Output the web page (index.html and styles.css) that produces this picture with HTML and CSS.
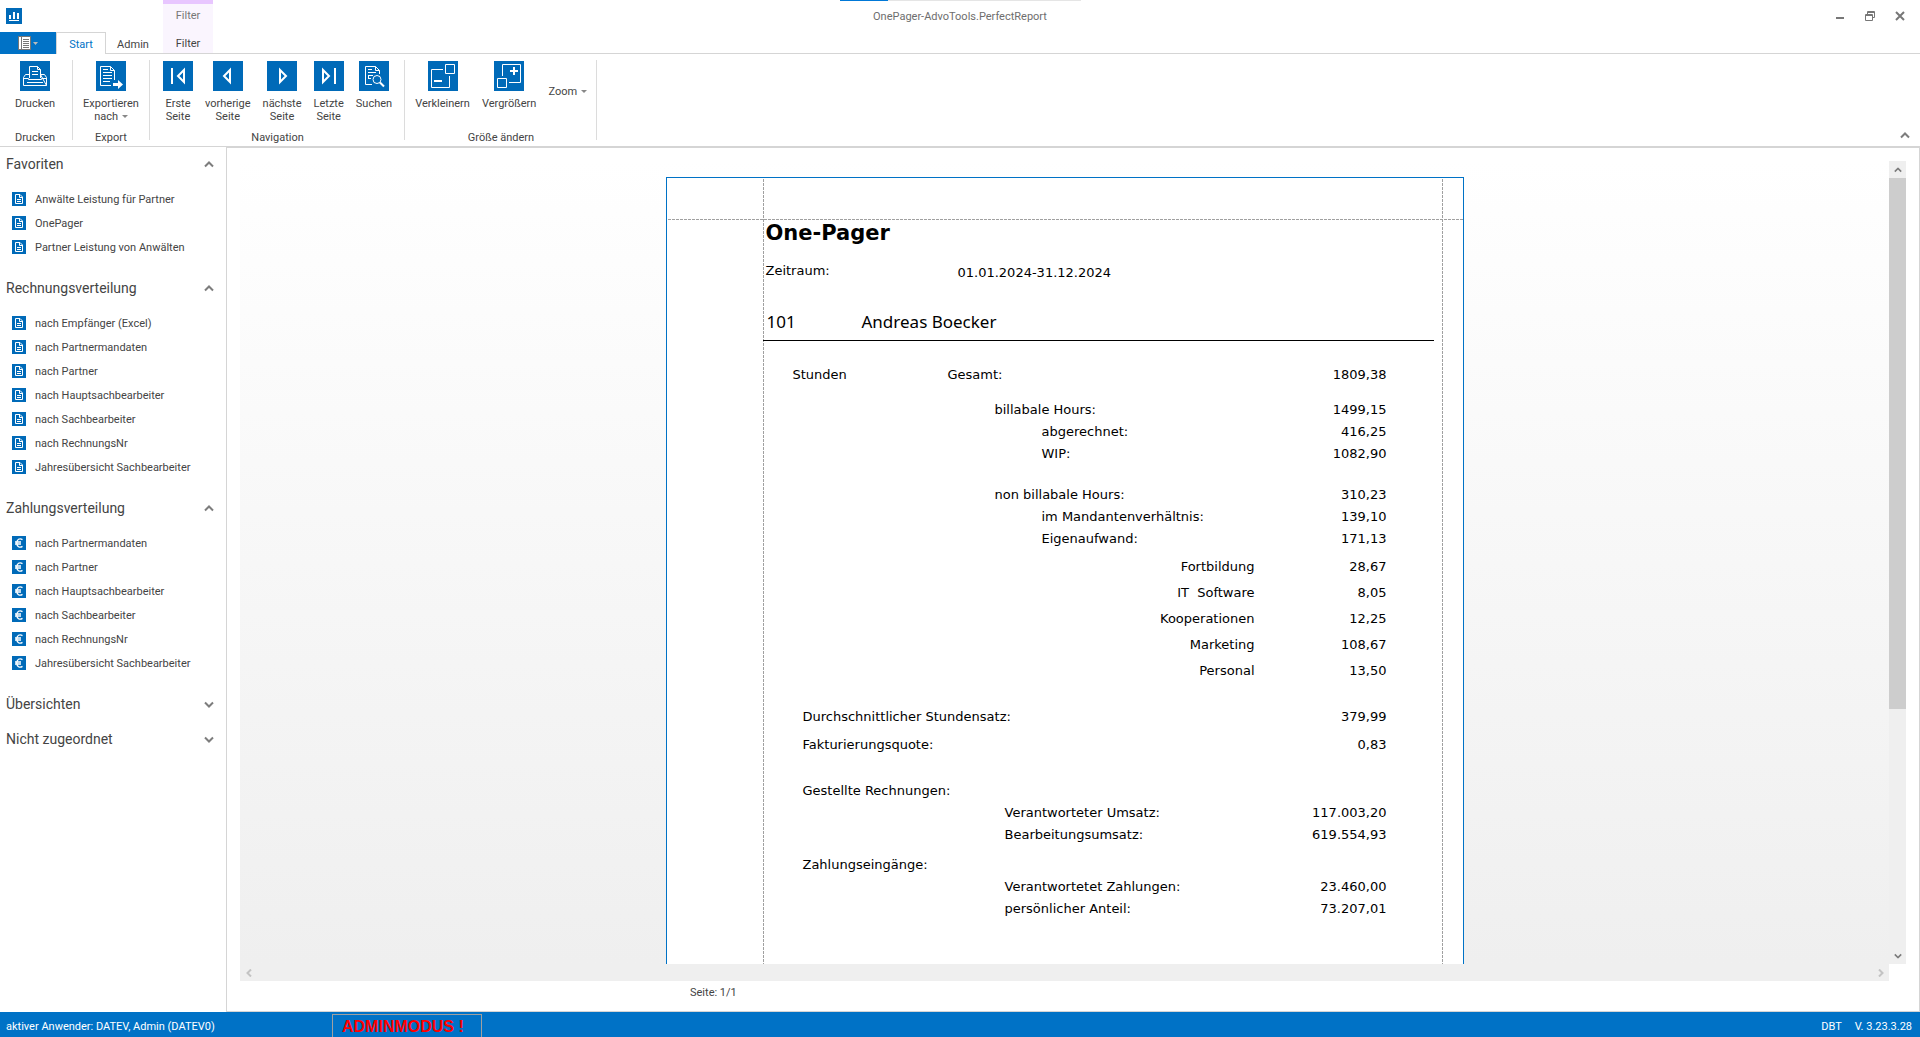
FILE: index.html
```html
<!DOCTYPE html>
<html lang="de">
<head>
    <meta charset="UTF-8">
    <meta name="viewport" content="width=device-width, initial-scale=1.0">
    <title>OnePager-AdvoTools.PerfectReport</title>
    <link rel="stylesheet" href="styles.css">
</head>
<body>
    <!-- Shared icons for the sidebar -->
    <svg class="defs" width="0" height="0">
        <symbol id="doc" viewBox="0 0 14 14">
            <rect width="14" height="14" fill="#006ab8"/>
            <path d="M3.5 2.5h4.500l2.500 2.500v6.500h-7zM7.500 2.500v3h3M5 7.500h4M5 9.500h4" fill="none" stroke="#fff"/>
        </symbol>
        <symbol id="euro" viewBox="0 0 14 14">
            <rect width="14" height="14" fill="#006ab8"/>
            <path d="M10.500 3.600C7.500 1.800 4.800 3.500 4.800 7s2.700 5.200 5.700 3.400M3 6h6M3 8h6" fill="none" stroke="#fff" stroke-width="1.300"/>
        </symbol>
        <symbol id="up" viewBox="0 0 10 7">
            <path d="M1 5.500l4-4 4 4" fill="none" stroke="#7d7d7d" stroke-width="2"/>
        </symbol>
        <symbol id="down" viewBox="0 0 10 7">
            <path d="M1 1.500l4 4 4-4" fill="none" stroke="#7d7d7d" stroke-width="2"/>
        </symbol>
    </svg>

    <header class="titlebar">
        <div class="titleLeft">
            <svg class="appIcon" width="16" height="16" viewBox="0 0 16 16">
                <rect width="16" height="16" fill="#006ab8"/>
                <path d="M4 7v4M8 4v7M12 5v6" stroke="#fff" stroke-width="2"/>
                <path d="M3 12.500h10" stroke="#fff"/>
            </svg>
            <span class="contextTitle">Filter</span>
        </div>
        <div class="title">OnePager-AdvoTools.PerfectReport</div>
        <div class="windowButtons">
            <button aria-label="Minimieren"><svg width="10" height="10"><path d="M1 7h8" stroke="#777" stroke-width="2"/></svg></button>
            <button aria-label="Wiederherstellen"><svg width="10" height="10"><path d="M.5 3.500h7v6h-7zM.5 4.500h7M2.500 3V.5h7v6H8M2.500 1.500h7" fill="none" stroke="#777"/></svg></button>
            <button aria-label="Schließen"><svg width="10" height="10"><path d="M1 1l8 8M9 1L1 9" stroke="#777" stroke-width="2"/></svg></button>
        </div>
        <div class="loadBar"><div class="loadDone"></div></div>
    </header>

    <nav class="tabs">
        <button class="appMenu" aria-label="Datei">
            <svg width="20" height="14" viewBox="0 0 20 14">
                <rect x=".5" y=".5" width="12" height="13" fill="#fff" stroke="#777"/>
                <path d="M3.500 0v14M5 3.500h6M5 5.500h6M5 7.500h6M5 9.500h6M5 11.500h6" stroke="#777"/>
                <path d="M15 6h5l-2.500 3z" fill="#bbb"/>
            </svg>
        </button>
        <button class="tab active">Start</button>
        <button class="tab">Admin</button>
        <button class="tab context">Filter</button>
    </nav>

    <div class="ribbon">
        <section class="group small">
            <div class="tools">
                <button class="tool">
                    <svg width="30" height="30"><rect width="30" height="30" fill="#006ab8"/><path d="M3.500 24.500v-8l2-3h4M20.500 13.500h4l2 3v8zM3.500 24.500h23M7 21.500h16M3.500 17.500h5v1h13v-1h5M9.500 17V5.500h8l3 3V17M17.500 5.500v3h3M12 10.500h6M12 13.500h6" fill="none" stroke="#fff"/></svg>
                    <span>Drucken</span>
                </button>
            </div>
            <div class="caption">Drucken</div>
        </section>
        <section class="group medium">
            <div class="tools">
                <button class="tool">
                    <svg width="30" height="30"><rect width="30" height="30" fill="#006ab8"/><path d="M15 24.500H4.500v-19h10l4 4V19M14.500 5.500v4h4M7 8.500h5M7 11.500h9M7 14.500h9M7 17.500h9M7 20.500h7" fill="none" stroke="#fff"/><path d="M17 22h5v-3l5 4.500-5 4.500v-3h-5z" fill="#fff"/></svg>
                    <span>Exportieren<br>nach <i class="caret"></i></span>
                </button>
            </div>
            <div class="caption">Export</div>
        </section>
        <section class="group navigation">
            <div class="tools">
                <button class="tool">
                    <svg width="30" height="30"><rect width="30" height="30" fill="#006ab8"/><path d="M9 7v16M21 9v12l-6-6z" fill="none" stroke="#fff" stroke-width="2"/></svg>
                    <span>Erste<br>Seite</span>
                </button>
                <button class="tool">
                    <svg width="30" height="30"><rect width="30" height="30" fill="#006ab8"/><path d="M17 9v12l-6-6z" fill="none" stroke="#fff" stroke-width="2"/></svg>
                    <span>vorherige<br>Seite</span>
                </button>
                <button class="tool">
                    <svg width="30" height="30"><rect width="30" height="30" fill="#006ab8"/><path d="M13 9v12l6-6z" fill="none" stroke="#fff" stroke-width="2"/></svg>
                    <span>nächste<br>Seite</span>
                </button>
                <button class="tool">
                    <svg width="30" height="30"><rect width="30" height="30" fill="#006ab8"/><path d="M21 7v16M9 9v12l6-6z" fill="none" stroke="#fff" stroke-width="2"/></svg>
                    <span>Letzte<br>Seite</span>
                </button>
                <button class="tool">
                    <svg width="30" height="30"><rect width="30" height="30" fill="#006ab8"/><path d="M13 23.500H6.500v-18h10l4 4V13M16.500 5.500v4h4M9 8.500h4M9 11.500h8M9 14.500h5M9 17.500h3M9.500 14v4" fill="none" stroke="#fff"/><circle cx="18" cy="18.500" r="4" fill="none" stroke="#fff"/><path d="M21 21.500l4 4" stroke="#fff" stroke-width="2"/></svg>
                    <span>Suchen</span>
                </button>
            </div>
            <div class="caption">Navigation</div>
        </section>
        <section class="group">
            <div class="tools">
                <button class="tool">
                    <svg width="30" height="30"><rect width="30" height="30" fill="#006ab8"/><path d="M15 8.500H3.500v18h18V15M17.500 3.500h9v9h-9z" fill="none" stroke="#fff"/><path d="M6 20h8" stroke="#fff" stroke-width="2"/></svg>
                    <span>Verkleinern</span>
                </button>
                <button class="tool">
                    <svg width="30" height="30"><rect width="30" height="30" fill="#006ab8"/><path d="M8.500 15V3.500h18v18H15M3.500 17.500h9v9h-9z" fill="none" stroke="#fff"/><path d="M16 10h8M20 6v8" stroke="#fff" stroke-width="2"/></svg>
                    <span>Vergrößern</span>
                </button>
                <button class="tool zoom"><span>Zoom <i class="caret"></i></span></button>
            </div>
            <div class="caption">Größe ändern</div>
        </section>
        <button class="collapse" aria-label="Menüband minimieren"><svg width="10" height="7"><use href="#up"/></svg></button>
    </div>

    <div class="content">
        <aside class="sidebar">
            <button class="groupHeader">Favoriten <svg width="10" height="7"><use href="#up"/></svg></button>
            <ul>
                <li><a href="#"><svg width="14" height="14"><use href="#doc"/></svg>Anwälte Leistung für Partner</a></li>
                <li><a href="#"><svg width="14" height="14"><use href="#doc"/></svg>OnePager</a></li>
                <li><a href="#"><svg width="14" height="14"><use href="#doc"/></svg>Partner Leistung von Anwälten</a></li>
            </ul>
            <button class="groupHeader">Rechnungsverteilung <svg width="10" height="7"><use href="#up"/></svg></button>
            <ul>
                <li><a href="#"><svg width="14" height="14"><use href="#doc"/></svg>nach Empfänger (Excel)</a></li>
                <li><a href="#"><svg width="14" height="14"><use href="#doc"/></svg>nach Partnermandaten</a></li>
                <li><a href="#"><svg width="14" height="14"><use href="#doc"/></svg>nach Partner</a></li>
                <li><a href="#"><svg width="14" height="14"><use href="#doc"/></svg>nach Hauptsachbearbeiter</a></li>
                <li><a href="#"><svg width="14" height="14"><use href="#doc"/></svg>nach Sachbearbeiter</a></li>
                <li><a href="#"><svg width="14" height="14"><use href="#doc"/></svg>nach RechnungsNr</a></li>
                <li><a href="#"><svg width="14" height="14"><use href="#doc"/></svg>Jahresübersicht Sachbearbeiter</a></li>
            </ul>
            <button class="groupHeader">Zahlungsverteilung <svg width="10" height="7"><use href="#up"/></svg></button>
            <ul>
                <li><a href="#"><svg width="14" height="14"><use href="#euro"/></svg>nach Partnermandaten</a></li>
                <li><a href="#"><svg width="14" height="14"><use href="#euro"/></svg>nach Partner</a></li>
                <li><a href="#"><svg width="14" height="14"><use href="#euro"/></svg>nach Hauptsachbearbeiter</a></li>
                <li><a href="#"><svg width="14" height="14"><use href="#euro"/></svg>nach Sachbearbeiter</a></li>
                <li><a href="#"><svg width="14" height="14"><use href="#euro"/></svg>nach RechnungsNr</a></li>
                <li><a href="#"><svg width="14" height="14"><use href="#euro"/></svg>Jahresübersicht Sachbearbeiter</a></li>
            </ul>
            <button class="groupHeader">Übersichten <svg width="10" height="7"><use href="#down"/></svg></button>
            <button class="groupHeader">Nicht zugeordnet <svg width="10" height="7"><use href="#down"/></svg></button>
        </aside>

        <main class="preview">
            <div class="viewRow">
                <div class="viewport">
                    <article class="page">
                        <h1>One-Pager</h1>
                        <div class="period"><span>Zeitraum:</span><span class="dates">01.01.2024-31.12.2024</span></div>
                        <div class="person"><span>101</span><span>Andreas Boecker</span></div>

                        <table class="hours">
                            <tr><th class="section">Stunden</th><th>Gesamt:</th><td>1809,38</td></tr>
                            <tr class="billable"><th></th><th class="level1">billabale Hours:</th><td>1499,15</td></tr>
                            <tr><th></th><th class="level2">abgerechnet:</th><td>416,25</td></tr>
                            <tr><th></th><th class="level2">WIP:</th><td>1082,90</td></tr>
                            <tr class="nonBillable"><th></th><th class="level1">non billabale Hours:</th><td>310,23</td></tr>
                            <tr><th></th><th class="level2">im Mandantenverhältnis:</th><td>139,10</td></tr>
                            <tr><th></th><th class="level2">Eigenaufwand:</th><td>171,13</td></tr>
                            <tr class="spaced"><th></th><th class="category">Fortbildung</th><td>28,67</td></tr>
                            <tr class="detail"><th></th><th class="category">IT&nbsp; Software</th><td>8,05</td></tr>
                            <tr class="detail"><th></th><th class="category">Kooperationen</th><td>12,25</td></tr>
                            <tr class="detail"><th></th><th class="category">Marketing</th><td>108,67</td></tr>
                            <tr class="detail"><th></th><th class="category">Personal</th><td>13,50</td></tr>
                        </table>

                        <table class="money">
                            <colgroup><col class="indent"><col><col class="amount"></colgroup>
                            <tr><th colspan="2">Durchschnittlicher Stundensatz:</th><td>379,99</td></tr>
                            <tr class="spaced"><th colspan="2">Fakturierungsquote:</th><td>0,83</td></tr>
                            <tr class="invoices"><th colspan="2">Gestellte Rechnungen:</th><td></td></tr>
                            <tr><th></th><th>Verantworteter Umsatz:</th><td>117.003,20</td></tr>
                            <tr><th></th><th>Bearbeitungsumsatz:</th><td>619.554,93</td></tr>
                            <tr class="payments"><th colspan="2">Zahlungseingänge:</th><td></td></tr>
                            <tr><th></th><th>Verantwortetet Zahlungen:</th><td>23.460,00</td></tr>
                            <tr><th></th><th>persönlicher Anteil:</th><td>73.207,01</td></tr>
                        </table>
                    </article>
                </div>
                <div class="vScroll">
                    <button aria-label="Nach oben"><svg width="8" height="6" viewBox="0 0 10 7"><use href="#up"/></svg></button>
                    <div class="track"><div class="thumb"></div></div>
                    <button aria-label="Nach unten"><svg width="8" height="6" viewBox="0 0 10 7"><use href="#down"/></svg></button>
                </div>
            </div>
            <div class="hScroll">
                <button aria-label="Nach links"><svg width="6" height="8"><path d="M5 .5L1.500 4 5 7.500" fill="none" stroke="#c3c3c3" stroke-width="2"/></svg></button>
                <button aria-label="Nach rechts"><svg width="6" height="8"><path d="M1 .5L4.500 4 1 7.500" fill="none" stroke="#c3c3c3" stroke-width="2"/></svg></button>
            </div>
            <div class="pageInfo"><span>Seite: 1/1</span></div>
        </main>
    </div>

    <footer class="statusbar">
        <span class="user">aktiver Anwender: DATEV, Admin (DATEV0)</span>
        <span class="adminMode">ADMINMODUS !</span>
        <span class="version"><span>DBT</span><span>V. 3.23.3.28</span></span>
    </footer>
</body>
</html>
```
FILE: styles.css
```css
* {
    box-sizing: border-box;
}
body {
    margin: 0;
    height: 100vh;
    display: flex;
    flex-direction: column;
    overflow: hidden;
    background-color: #fff;
    color: #444;
    font-family: Roboto, "Noto Sans", sans-serif;
    font-size: 11px;
    line-height: 13px;
}
button {
    margin: 0;
    padding: 0;
    border: none;
    background: none;
    color: inherit;
    font: inherit;
    cursor: pointer;
}
svg {
    display: block;
    flex: none;
}
.defs {
    position: absolute;
}

/* Title bar */
.titlebar {
    position: relative;
    display: grid;
    grid-template-columns: 1fr auto 1fr;
    height: 32px;
    flex: none;
}
.titleLeft {
    display: flex;
    align-items: center;
    padding-left: 6px;
}
.contextTitle {
    width: 50px;
    height: 32px;
    margin-left: 141px;
    padding-top: 5px;
    border-top: 4px solid #e8c6ff;
    background-color: #faf5fe;
    color: #777;
    text-align: center;
}
.title {
    padding-top: 10px;
    color: #6e6e6e;
}
.windowButtons {
    display: flex;
    justify-content: flex-end;
    padding-right: 5px;
}
.windowButtons button {
    display: flex;
    align-items: center;
    justify-content: center;
    width: 30px;
}
.loadBar {
    position: absolute;
    top: 0;
    left: 840px;
    width: 241px;
    height: 1px;
    background-color: #e5e5e5;
}
.loadDone {
    width: 48px;
    height: 1px;
    background-color: #0078d7;
}

/* Tabs */
.tabs {
    display: flex;
    flex: none;
    height: 22px;
    background: linear-gradient(#d5d5d5, #d5d5d5) bottom / 100% 1px no-repeat;
}
.appMenu {
    display: flex;
    align-items: center;
    justify-content: center;
    width: 56px;
    background-color: #0072c6;
}
.tab {
    width: 54px;
    padding-top: 2px;
}
.tab.active {
    width: 50px;
    border: 1px solid #d5d5d5;
    border-bottom: none;
    background-color: #fff;
    color: #0072c6;
}
.tab.context {
    width: 50px;
    height: 21px;
    margin-left: 3px;
    background-color: #faf5fe;
}

/* Ribbon */
.ribbon {
    display: flex;
    flex: none;
    height: 93px;
    padding: 6px 0 2px;
    border-bottom: 1px solid #d5d5d5;
}
.group {
    display: flex;
    flex-direction: column;
    justify-content: space-between;
    padding: 1px 4px 0;
    background: linear-gradient(#dcdcdc, #dcdcdc) right top / 1px 80px no-repeat;
}
.group.small {
    width: 73px;
    padding: 1px 3px 0 0;
}
.group.medium {
    width: 77px;
    padding: 1px 1px 0 0;
}
.group.navigation {
    padding: 1px 7px 0;
}
.tools {
    display: flex;
    justify-content: center;
}
.tool {
    display: flex;
    flex-direction: column;
    align-items: center;
    gap: 6px;
    padding: 0 6px;
}
.tool.zoom {
    height: 60px;
    justify-content: center;
}
.caret {
    display: inline-block;
    margin-left: 1px;
    vertical-align: 2px;
    border: 3px solid transparent;
    border-top-color: #888;
    border-bottom: none;
}
.caption {
    text-align: center;
}
.collapse {
    align-self: flex-end;
    margin-left: auto;
    padding: 5px 10px;
}

/* Sidebar */
.content {
    display: flex;
    flex: 1;
    min-height: 0;
}
.sidebar {
    width: 226px;
    flex: none;
}
.groupHeader {
    display: flex;
    align-items: center;
    justify-content: space-between;
    width: 100%;
    height: 35px;
    padding: 0 12px 0 6px;
    font-size: 14px;
}
.sidebar ul {
    margin: 0;
    padding: 5px 0 12px 12px;
    list-style: none;
}
.sidebar a {
    display: flex;
    align-items: center;
    gap: 9px;
    height: 24px;
    color: inherit;
    text-decoration: none;
}

/* Preview */
.preview {
    display: flex;
    flex-direction: column;
    flex: 1;
    min-width: 0;
    padding: 13px 13px 0;
    border: 1px solid #d5d5d5;
}
.viewRow {
    display: flex;
    flex: 1;
    min-height: 0;
}
.viewport {
    display: flex;
    flex: 1;
    padding-top: 16px;
    overflow: hidden;
    background: linear-gradient(#fff, #efefef);
}
.page {
    width: 798px;
    margin: 0 auto;
    padding: 43px 0 0 97px;
    border: 1px solid #0072c6;
    border-bottom: none;
    background:
        repeating-linear-gradient(#a0a0a0 0 3px, transparent 3px 4px) 96px 1px / 1px 100% no-repeat,
        repeating-linear-gradient(#a0a0a0 0 3px, transparent 3px 4px) right 20px top 1px / 1px 100% no-repeat,
        repeating-linear-gradient(90deg, #a0a0a0 0 3px, transparent 3px 4px) 1px 41px / 100% 1px no-repeat,
        #fff;
    color: #000;
    font-family: "DejaVu Sans", sans-serif;
    font-size: 13px;
    line-height: 22px;
}
.page h1 {
    margin: 0;
    padding-left: 2px;
    font-size: 21px;
    line-height: 24px;
}
.period {
    display: flex;
    padding: 15px 0 0 2px;
}
.period span {
    width: 192px;
}
.period .dates {
    padding-top: 2px;
}
.person {
    display: flex;
    width: 671px;
    margin-left: -1px;
    padding: 27px 0 7px 4px;
    border-bottom: 1px solid #000;
    font-family: "Noto Sans", sans-serif;
    font-size: 17px;
}
.person span:first-child {
    width: 95px;
}
.page table {
    border-collapse: collapse;
    table-layout: fixed;
}
.page th,
.page td {
    height: 22px;
    padding: 0;
    font-weight: normal;
    line-height: 22px;
    text-align: left;
    vertical-align: bottom;
}
.page td {
    text-align: right;
}
.hours {
    width: 594px;
    margin: 23px 0 0 29px;
}
.hours .section {
    width: 155px;
}
.hours td {
    width: 132px;
}
.page .level1 {
    padding-left: 47px;
}
.page .level2 {
    padding-left: 94px;
}
.page .category {
    text-align: right;
}
.page .billable th {
    height: 35px;
}
.page .nonBillable th {
    height: 41px;
}
.page .spaced th {
    height: 28px;
}
.page .detail th {
    height: 26px;
}
.money {
    width: 584px;
    margin: 24px 0 0 39px;
}
.money .indent {
    width: 202px;
}
.money .amount {
    width: 132px;
}
.page .invoices th {
    height: 46px;
}
.page .payments th {
    height: 30px;
}

/* Scrollbars */
.vScroll {
    display: flex;
    flex-direction: column;
    width: 17px;
    background-color: #efefef;
}
.vScroll button,
.hScroll button {
    display: flex;
    align-items: center;
    justify-content: center;
    width: 17px;
    height: 17px;
}
.track {
    flex: 1;
}
.thumb {
    height: 69%;
    background-color: #cdcdcd;
}
.hScroll {
    display: flex;
    justify-content: space-between;
    margin-right: 17px;
    background-color: #efefef;
}
.pageInfo {
    width: 798px;
    height: 30px;
    margin: 0 auto;
    padding: 5px 0 0 16px;
}

/* Status bar */
.statusbar {
    display: flex;
    align-items: center;
    flex: none;
    height: 25px;
    padding: 3px 8px 0 6px;
    background-color: #0072c6;
    color: #fff;
}
.user {
    width: 326px;
}
.adminMode {
    align-self: flex-end;
    width: 150px;
    height: 23px;
    padding-left: 9px;
    border: 1px solid #a0a0a0;
    border-bottom: none;
    color: #f00;
    font: bold 16px/23px "Liberation Sans", sans-serif;
}
.version {
    display: flex;
    gap: 13px;
    margin-left: auto;
}
```
